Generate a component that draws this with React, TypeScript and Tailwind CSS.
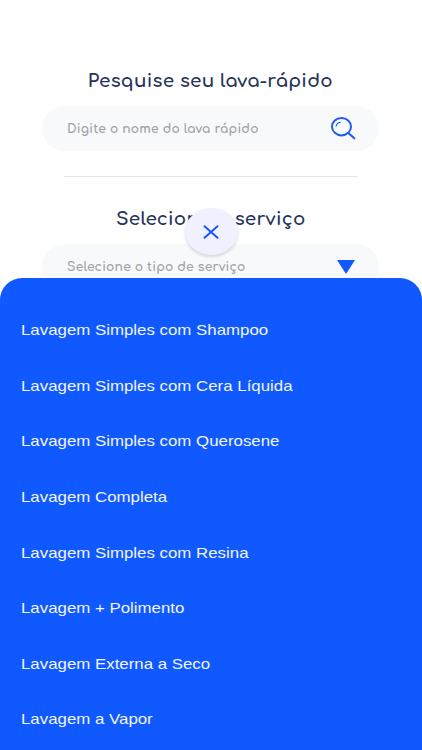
type Service = {
  id: number;
  name: string;
};

const SERVICES: Service[] = [
  { id: 1, name: "Lavagem Simples com Shampoo" },
  { id: 2, name: "Lavagem Simples com Cera Líquida" },
  { id: 3, name: "Lavagem Simples com Querosene" },
  { id: 4, name: "Lavagem Completa" },
  { id: 5, name: "Lavagem Simples com Resina" },
  { id: 6, name: "Lavagem + Polimento" },
  { id: 7, name: "Lavagem Externa a Seco" },
  { id: 8, name: "Lavagem a Vapor" },
];

const titleStyle =
  "text-center text-[17.5px] leading-6 font-bold tracking-[0.25px] scale-x-[1.045] text-[#26345a] whitespace-nowrap";
const fieldStyle =
  "flex h-[45px] w-[337px] items-center justify-between rounded-full bg-[#f8f9fb] pl-[25px] pr-[23px]";
const placeholderStyle =
  "origin-left scale-x-[1.05] pt-0.5 text-[11.7px] leading-5 font-bold tracking-[0.2px] text-[#a0a1a6] whitespace-nowrap";

const SearchIcon = () => (
  <svg className="translate-x-[0.5px]" width="26" height="24" viewBox="0 0 26 24" fill="none" stroke="#1f5bf0" strokeLinecap="round">
    <ellipse cx="11" cy="9.7" rx="9.5" ry="8.7" strokeWidth="2" />
    <path d="M5.6 9.2C6 6.9 7.5 5.5 9.8 5.2" strokeWidth="1.1" />
    <path d="M17.8 16L23.8 21.3" strokeWidth="2.1" />
  </svg>
);

const CloseIcon = () => (
  <svg width="16" height="14" viewBox="0 0 16 14" fill="none" stroke="#1553f2" strokeWidth="1.9" strokeLinecap="round">
    <path d="M1.5 1.2L14.5 12.8M14.5 1.2L1.5 12.8" />
  </svg>
);

const ServiceSheet = () => (
  <div className="absolute inset-x-0 top-[278px] h-[472px] overflow-hidden rounded-t-[22px] bg-[#1059ff] pt-[24.4px]">
    <ul className="flex flex-col font-['Liberation_Sans',Arial,sans-serif]">
      {SERVICES.map((service) => (
        <li key={service.id} className="flex h-[55.6px] shrink-0 items-center pl-[21px]">
          <span className="origin-left scale-x-[1.123] text-[15px] leading-5 whitespace-nowrap text-[#f0f5ff]">
            {service.name}
          </span>
        </li>
      ))}
    </ul>
  </div>
);

export default function App() {
  return (
    <div className="relative h-[750px] w-[422px] overflow-hidden bg-white font-[Comfortaa,Quicksand,Lato,sans-serif]">
      <div className="flex flex-col items-center pt-[69.5px] pr-px">
        <h2 className={titleStyle}>Pesquise seu lava-rápido</h2>
        <div className={`${fieldStyle} mt-[12.5px]`}>
          <span className={placeholderStyle}>Digite o nome do lava rápido</span>
          <SearchIcon />
        </div>
        <div className="mt-[25px] h-px w-[294px] bg-[#e6e6e8]" />
        <h2 className={`${titleStyle} mt-[30.5px]`}>Selecione o serviço</h2>
        <div className={`${fieldStyle} mt-[12.5px]`}>
          <span className={placeholderStyle}>Selecione o tipo de serviço</span>
          <svg width="20" height="14" viewBox="0 0 20 14">
            <path d="M1 0H19L10 14Z" fill="#1059ff" />
          </svg>
        </div>
      </div>
      <ServiceSheet />
      <button
        aria-label="Fechar"
        className="absolute left-[185px] top-[208px] flex h-[47px] w-[53px] items-center justify-center rounded-[50%] bg-[#f1f0ff] pr-0.5 shadow-[0_2px_3px_rgba(0,0,0,0.14)]"
      >
        <CloseIcon />
      </button>
    </div>
  );
}
